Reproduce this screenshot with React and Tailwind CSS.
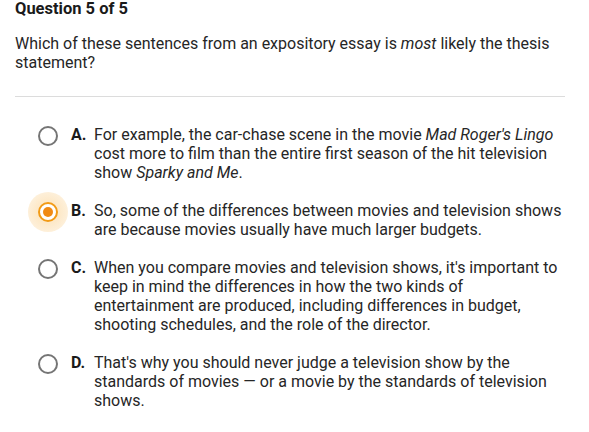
import React from "react";

function Radio({ selected }) {
  if (selected) {
    return (
      <div className="relative w-[20px] h-[20px] shrink-0">
        <div className="absolute left-[-10px] top-[-10px] w-[40px] h-[40px] rounded-full bg-[radial-gradient(circle,#fde9c9_40%,#fef6ea_100%)]" />
        <div className="absolute inset-0 rounded-full border-2 border-[#f29b17] bg-white flex items-center justify-center">
          <div className="w-[10px] h-[10px] rounded-full bg-[#f08a14]" />
        </div>
      </div>
    );
  }
  return <div className="w-[20px] h-[20px] shrink-0 rounded-full border-2 border-[#757575] bg-white" />;
}

function Option({ letter, selected, children }) {
  return (
    <div className="flex items-start">
      <div className="w-[56px] pl-[23px] pt-[1px] flex">
        <Radio selected={selected} />
      </div>
      <div className="w-[23px] font-bold text-[#1a1a1a]">{letter}</div>
      <div className="w-[470px]">{children}</div>
    </div>
  );
}

export default function App() {
  return (
    <div className="w-[589px] h-[432px] bg-white text-[#262626] overflow-hidden" style={{ fontFamily: "Roboto, sans-serif" }}>
      <div className="px-[15px]">
        <div className="text-[16.5px] leading-[19px] font-bold text-[#1a1a1a] -mt-[1px]">Question 5 of 5</div>
        <div className="mt-[16px] text-[16px] leading-[19px] w-[550px]">
          Which of these sentences from an expository essay is <i>most</i> likely the thesis statement?
        </div>
        <div className="mt-[24px] w-[550px] h-[1px] bg-[#dcdcdc]" />
      </div>
      <div className="mt-[28px] flex flex-col gap-[19px] text-[16px] leading-[19px] pl-[15px]">
        <Option letter="A.">
          For example, the car-chase scene in the movie <i>Mad Roger's Lingo</i> cost more to film than the entire first season of the hit television show <i>Sparky and Me</i>.
        </Option>
        <Option letter="B." selected>
          So, some of the differences between movies and television shows are because movies usually have much larger budgets.
        </Option>
        <Option letter="C.">
          When you compare movies and television shows, it's important to keep in mind the differences in how the two kinds of entertainment are produced, including differences in budget, shooting schedules, and the role of the director.
        </Option>
        <Option letter="D.">
          That's why you should never judge a television show by the standards of movies — or a movie by the standards of television shows.
        </Option>
      </div>
    </div>
  );
}
